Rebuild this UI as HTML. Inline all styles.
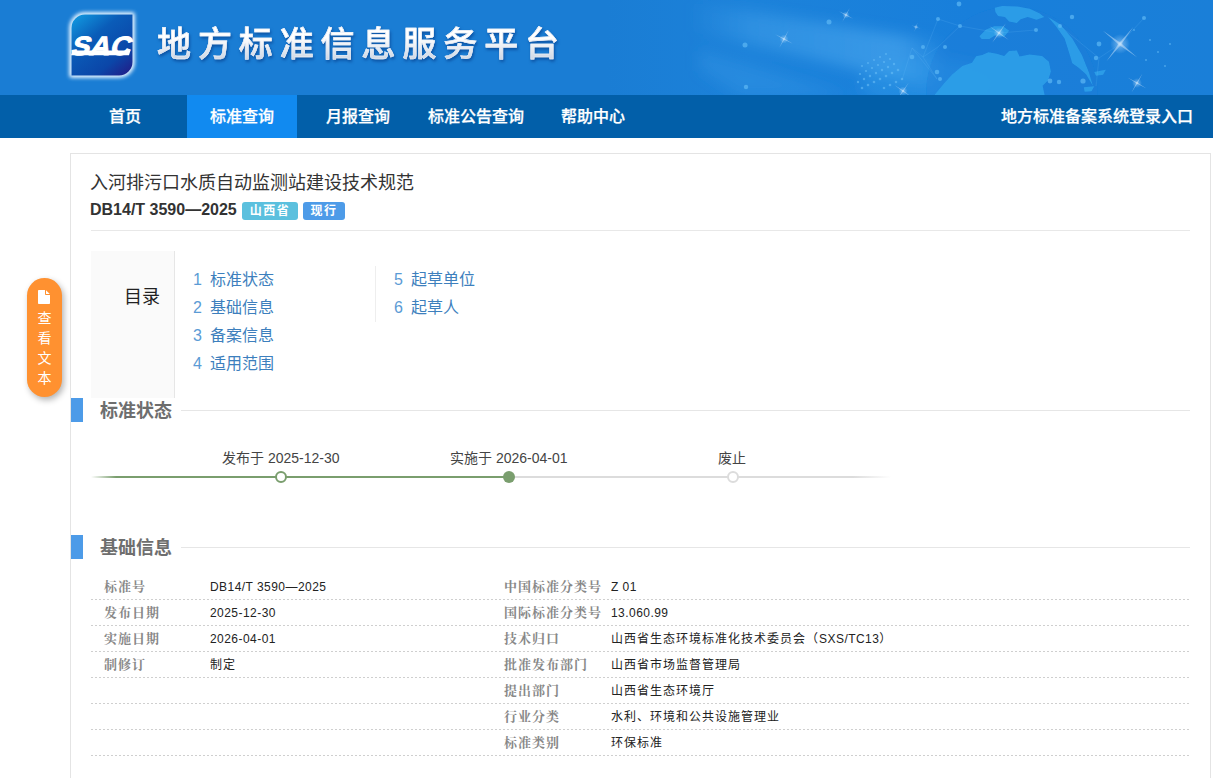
<!DOCTYPE html>
<html lang="zh-CN">
<head>
<meta charset="utf-8">
<title>地方标准信息服务平台</title>
<style>
*{box-sizing:border-box;}
html,body{margin:0;padding:0;}
body{width:1213px;height:778px;overflow:hidden;background:#fff;font-family:"Liberation Sans","Noto Sans CJK SC",sans-serif;color:#333;position:relative;}
.hdr{position:absolute;left:0;top:0;width:1213px;height:95px;background:#1b7ed6;overflow:hidden;}
.hdr .glow{position:absolute;left:600px;top:0;width:613px;height:95px;}
.logo{position:absolute;left:71px;top:14px;width:62px;height:62px;}
.sitename{position:absolute;left:157px;top:22px;font-size:34px;line-height:44px;letter-spacing:6.9px;color:transparent;font-weight:500;-webkit-text-stroke:0.55px #e9eef6;background:linear-gradient(#ffffff 35%,#c4cfdf 95%);-webkit-background-clip:text;background-clip:text;filter:drop-shadow(1px 2px 1.5px rgba(0,45,120,.55));white-space:nowrap;}
.nav{position:absolute;left:0;top:95px;width:1213px;height:43px;background:#025fa9;}
.nav a{position:absolute;top:0;height:43px;line-height:43px;color:#fff;font-size:16px;font-weight:500;-webkit-text-stroke:.25px #fff;text-decoration:none;text-align:center;white-space:nowrap;}
.nav a.act{background:#118af0;}
.panel{position:absolute;left:70px;top:153px;width:1141px;height:640px;border:1px solid #e4e4e4;background:#fff;}
.title{position:absolute;left:90px;top:169px;font-size:18px;line-height:28px;color:#333;white-space:nowrap;}
.code{position:absolute;left:90px;top:199px;font-size:16px;line-height:22px;font-weight:bold;color:#333;white-space:nowrap;}
.tag{position:absolute;top:202px;height:18px;line-height:18px;color:#fff;font-size:12px;font-weight:bold;border-radius:3px;text-align:center;letter-spacing:1.5px;}
.hr1{position:absolute;left:91px;top:230px;width:1099px;height:1px;background:#e8e8e8;}
.mulu{position:absolute;left:91px;top:251px;width:84px;height:147px;background:#fafafa;border-right:1px solid #e6e6e6;}
.mulu span{position:absolute;left:33px;top:33px;font-size:18px;line-height:26px;color:#222;}
.toc{position:absolute;font-size:16px;line-height:28px;color:#3d7fbd;white-space:nowrap;}
.toc i{font-style:normal;color:#5b9bd5;margin-right:8px;}
.vsep{position:absolute;left:375px;top:266px;width:1px;height:56px;background:#eee;}
.sec{position:absolute;left:71px;width:12px;height:24px;background:#4d9be8;}
.sect{position:absolute;left:100px;font-size:18px;line-height:26px;font-weight:bold;color:#6e6e6e;white-space:nowrap;}
.secl{position:absolute;left:181px;width:1009px;height:1px;background:#e6e6e6;}
.tl{position:absolute;font-size:14px;line-height:18px;color:#444;white-space:nowrap;}
.row{position:absolute;left:91px;width:1099px;height:1px;background:repeating-linear-gradient(90deg,#cfcfcf 0,#cfcfcf 2px,transparent 2px,transparent 4px);}
.k{position:absolute;font-size:13px;line-height:18px;color:#888;font-weight:bold;letter-spacing:1px;white-space:nowrap;font-family:"Liberation Serif","Noto Serif CJK SC",serif;}
.v{position:absolute;font-size:12px;line-height:18px;color:#222;white-space:nowrap;letter-spacing:1px;}
.v b{font-weight:normal;letter-spacing:.45px;}
.fbtn{position:absolute;left:27px;top:278px;width:35px;height:119px;border-radius:18px;background:#ff9130;box-shadow:2px 3px 6px rgba(0,0,0,.3);color:#fff;font-size:14px;line-height:20px;text-align:center;padding-top:30px;}
</style>
</head>
<body>
<div class="hdr">
<svg class="glow" style="left:0;width:1213px" viewBox="0 0 1213 95" width="1213" height="95">
<defs>
<linearGradient id="bg" x1="0" x2="1" y1="0" y2="0"><stop offset="0" stop-color="#1a7dd4"/><stop offset="0.5" stop-color="#1a7dd4"/><stop offset="0.62" stop-color="#1c82da"/><stop offset="0.8" stop-color="#187fdb"/><stop offset="1" stop-color="#1a7fd8"/></linearGradient>
<linearGradient id="st1" x1="0" x2="0" y1="0" y2="1"><stop offset="0" stop-color="#5fb6f5" stop-opacity="0"/><stop offset="0.5" stop-color="#5fb6f5" stop-opacity=".38"/><stop offset="1" stop-color="#5fb6f5" stop-opacity="0"/></linearGradient>
<linearGradient id="bm" gradientUnits="userSpaceOnUse" x1="690" x2="950" y1="0" y2="0"><stop offset="0" stop-color="#58b2f4" stop-opacity="0"/><stop offset="0.25" stop-color="#58b2f4" stop-opacity=".3"/><stop offset="0.8" stop-color="#58b2f4" stop-opacity=".5"/><stop offset="1" stop-color="#58b2f4" stop-opacity="0"/></linearGradient>
<radialGradient id="sp"><stop offset="0" stop-color="#fff" stop-opacity=".7"/><stop offset="0.35" stop-color="#bfe2ff" stop-opacity=".35"/><stop offset="1" stop-color="#bfe2ff" stop-opacity="0"/></radialGradient>
<radialGradient id="lg" cx="0.55" cy="0.6" r="0.6"><stop offset="0" stop-color="#3aa6ee" stop-opacity=".55"/><stop offset="1" stop-color="#3aa6ee" stop-opacity="0"/></radialGradient>
<filter id="bl" x="-20%" y="-50%" width="140%" height="200%"><feGaussianBlur stdDeviation="7"/></filter>
<filter id="b1"><feGaussianBlur stdDeviation="0.6"/></filter>
<symbol id="star" viewBox="-20 -20 40 40" overflow="visible"><circle r="9" fill="url(#sp)"/><path d="M-20 0 L0 -1.1 L20 0 L0 1.1Z M0 -20 L1.1 0 L0 20 L-1.1 0Z" fill="#e8f4ff" opacity=".42"/></symbol>
</defs>
<rect width="1213" height="95" fill="url(#bg)"/>
<g filter="url(#bl)">
<path d="M690 2 L945 42 L935 88 L690 30Z" fill="url(#bm)"/>
<path d="M700 50 L850 96 L740 96 L700 70Z" fill="#4aa9f0" opacity=".22"/>
<ellipse cx="930" cy="84" rx="70" ry="26" fill="#3aa6ee" opacity=".3"/>
</g>
<g transform="translate(880,0) scale(0.2747)" filter="url(#b1)">
<circle cx="480" cy="335" r="312" fill="#167ad6" opacity=".3"/>
<g fill="#2e9fe9" opacity=".92">
<path d="M195 350 L232 305 L262 272 L300 240 L335 228 L350 205 L372 200 L395 190 L425 196 L452 204 L470 186 L498 184 L508 206 L545 198 L590 204 L615 225 L622 260 L612 292 L592 312 L600 350Z"/>
<path d="M418 28 L445 22 L500 24 L545 32 L580 48 L598 62 L570 72 L538 62 L512 70 L498 84 L470 78 L455 62 L430 58 L420 44Z"/>
<path d="M362 132 L385 108 L415 96 L448 96 L470 112 L452 134 L420 128 L398 142 L370 142Z"/>
<path d="M612 62 L655 88 L700 140 L735 200 L760 262 L775 312 L750 270 L722 246 L700 230 L688 190 L672 140 L640 95Z"/>
<path d="M780 262 L822 254 L812 272 L786 276Z M742 318 L780 314 L770 332 L745 334Z"/>
</g>
</g>
<g stroke="#6ec0f7" stroke-width=".5" opacity=".35" fill="none">
<path d="M912 48 L923 57 L938 19 L960 26 L938 47 L923 57 L937 79 L912 48 L902 80 M960 26 L999 33 L1036 30 M1060 26 L1099 58 L1096 86 M1099 58 L1120 44 L1144 18"/>
</g>
<g fill="#5db8f5" opacity=".7">
<circle cx="912" cy="57" r="2.3"/><circle cx="923" cy="47" r="2"/><circle cx="938" cy="19" r="2"/><circle cx="960" cy="26" r="2"/><circle cx="945" cy="47" r="2"/><circle cx="937" cy="72" r="2.3"/><circle cx="940" cy="79" r="2"/><circle cx="959" cy="4" r="2.4"/><circle cx="1036" cy="30" r="2"/><circle cx="1060" cy="26" r="2"/><circle cx="1072" cy="17" r="2.2"/><circle cx="1050" cy="81" r="2.4"/><circle cx="1059" cy="82" r="2.2"/><circle cx="1083" cy="81" r="2.6"/><circle cx="1099" cy="44" r="2.4"/><circle cx="1096" cy="58" r="2.2"/><circle cx="1144" cy="18" r="2"/><circle cx="745" cy="45" r="2.5"/><circle cx="829" cy="22" r="2.5"/><circle cx="746" cy="87" r="2.2"/>
</g>
<g fill="#6cc0f8" opacity=".55">
<circle cx="862" cy="66" r="1"/><circle cx="868" cy="63" r="1"/><circle cx="874" cy="60" r="1"/><circle cx="880" cy="57" r="1"/><circle cx="886" cy="54" r="1"/>
<circle cx="860" cy="74" r="1.1"/><circle cx="866" cy="71" r="1.1"/><circle cx="872" cy="68" r="1.1"/><circle cx="878" cy="65" r="1.1"/><circle cx="884" cy="62" r="1.1"/><circle cx="890" cy="59" r="1.1"/>
<circle cx="858" cy="82" r="1.2"/><circle cx="864" cy="79" r="1.2"/><circle cx="870" cy="76" r="1.2"/><circle cx="876" cy="73" r="1.2"/><circle cx="882" cy="70" r="1.2"/><circle cx="888" cy="67" r="1.2"/><circle cx="894" cy="64" r="1.2"/>
<circle cx="862" cy="88" r="1.3"/><circle cx="868" cy="85" r="1.3"/><circle cx="874" cy="82" r="1.3"/><circle cx="880" cy="79" r="1.3"/><circle cx="886" cy="76" r="1.3"/><circle cx="892" cy="73" r="1.3"/><circle cx="898" cy="70" r="1.3"/>
<circle cx="884" cy="88" r="1.3"/><circle cx="890" cy="85" r="1.3"/><circle cx="896" cy="82" r="1.3"/><circle cx="902" cy="79" r="1.3"/><circle cx="1150" cy="40" r="1"/><circle cx="1158" cy="52" r="1"/><circle cx="1146" cy="60" r="1"/><circle cx="1165" cy="66" r="1"/><circle cx="1134" cy="30" r="1"/><circle cx="1170" cy="44" r="1"/>
</g>
<use href="#star" x="774" y="29" width="20" height="20" transform="rotate(28 784 39)"/>
<use href="#star" x="838" y="7" width="16" height="16" transform="rotate(28 846 15)"/>
<use href="#star" x="911" y="22" width="10" height="10" transform="rotate(20 916 27)"/>
<use href="#star" x="987" y="21" width="24" height="24" transform="rotate(35 999 33)"/>
<use href="#star" x="1098" y="22" width="44" height="44" transform="rotate(38 1120 44)"/>
<use href="#star" x="1126" y="72" width="22" height="22" transform="rotate(30 1137 83)"/>
<use href="#star" x="893" y="81" width="20" height="20" transform="rotate(35 903 91)"/>
</svg>
<svg class="logo" style="left:61px;top:4px;width:82px;height:82px" viewBox="-10 -10 82 82" overflow="visible">
<defs>
<linearGradient id="lgd" x1="0.1" y1="0" x2="0.9" y2="1"><stop offset="0" stop-color="#1196de"/><stop offset="0.35" stop-color="#0a5cb8"/><stop offset="0.75" stop-color="#0b46a8"/><stop offset="1" stop-color="#20208a"/></linearGradient>
<filter id="lgl" x="-30%" y="-30%" width="160%" height="160%"><feGaussianBlur stdDeviation="2.2"/></filter>
</defs>
<path d="M14 -1 H63 V48 A15 15 0 0 1 48 63 H-1 V14 A15 15 0 0 1 14 -1Z" fill="#e6f4ff" filter="url(#lgl)"/><path d="M14 -1 H63 V48 A15 15 0 0 1 48 63 H-1 V14 A15 15 0 0 1 14 -1Z" fill="#e6f4ff" filter="url(#lgl)" opacity=".7"/>
<path d="M14 0.5 H61.5 V48 A13.5 13.5 0 0 1 48 61.5 H0.5 V14 A13.5 13.5 0 0 1 14 0.5Z" fill="url(#lgd)"/>
<g transform="translate(0 41.3) skewX(-17)">
<rect x="0" y="-4.7" width="58" height="4.7" fill="#fff"/>
<text x="-1.2" y="0" font-family="'Liberation Sans',sans-serif" font-weight="bold" font-size="26.5" textLength="59.5" lengthAdjust="spacingAndGlyphs" fill="#fff" stroke="#fff" stroke-width=".9">SAC</text>
</g>
</svg>
<div class="sitename">地方标准信息服务平台</div>
</div>
<div class="nav">
<a style="left:70px;width:110px;">首页</a>
<a class="act" style="left:187px;width:110px;">标准查询</a>
<a style="left:303px;width:110px;">月报查询</a>
<a style="left:420px;width:112px;">标准公告查询</a>
<a style="left:538px;width:110px;">帮助中心</a>
<a style="left:991px;width:212px;">地方标准备案系统登录入口</a>
</div>
<div class="panel"></div>
<div class="title">入河排污口水质自动监测站建设技术规范</div>
<div class="code">DB14/T 3590—2025</div>
<div class="tag" style="left:242px;width:56px;background:#5bc0de;">山西省</div>
<div class="tag" style="left:303px;width:42px;background:#4d9be8;">现行</div>
<div class="hr1"></div>
<div class="mulu"><span>目录</span></div>
<div class="toc" style="left:193px;top:266px;"><i>1</i>标准状态</div>
<div class="toc" style="left:193px;top:294px;"><i>2</i>基础信息</div>
<div class="toc" style="left:193px;top:322px;"><i>3</i>备案信息</div>
<div class="toc" style="left:193px;top:350px;"><i>4</i>适用范围</div>
<div class="toc" style="left:394px;top:266px;"><i>5</i>起草单位</div>
<div class="toc" style="left:394px;top:294px;"><i>6</i>起草人</div>
<div class="vsep"></div>

<div class="sec" style="top:398px;"></div><div class="sect" style="top:398px;">标准状态</div><div class="secl" style="top:410px;"></div>
<div class="sec" style="top:535px;"></div><div class="sect" style="top:535px;">基础信息</div><div class="secl" style="top:547px;"></div>


<svg style="position:absolute;left:91px;top:466px;" width="800" height="22" viewBox="0 0 800 22">
<defs>
<linearGradient id="gl" x1="0" x2="1" y1="0" y2="0"><stop offset="0" stop-color="#7a9e6e" stop-opacity="0"/><stop offset="0.06" stop-color="#7a9e6e"/><stop offset="1" stop-color="#7a9e6e"/></linearGradient>
<linearGradient id="gr" x1="0" x2="1" y1="0" y2="0"><stop offset="0" stop-color="#dcdcdc"/><stop offset="0.9" stop-color="#dcdcdc"/><stop offset="1" stop-color="#dcdcdc" stop-opacity="0"/></linearGradient>
</defs>
<rect x="0" y="10" width="418" height="2" fill="url(#gl)"/>
<rect x="418" y="10" width="382" height="2" fill="url(#gr)"/>
<circle cx="190" cy="11" r="5" fill="#fff" stroke="#7a9e6e" stroke-width="2"/>
<circle cx="418" cy="11" r="6" fill="#7a9e6e"/>
<circle cx="642" cy="11" r="5" fill="#fff" stroke="#dcdcdc" stroke-width="2"/>
</svg>
<div class="tl" style="left:222px;top:449px;">发布于 2025-12-30</div>
<div class="tl" style="left:450px;top:449px;">实施于 2026-04-01</div>
<div class="tl" style="left:718px;top:449px;">废止</div>
<div class="row" style="top:599px;"></div>
<div class="row" style="top:625px;"></div>
<div class="row" style="top:651px;"></div>
<div class="row" style="top:677px;"></div>
<div class="row" style="top:703px;"></div>
<div class="row" style="top:729px;"></div>
<div class="row" style="top:755px;"></div>
<div class="k" style="left:104px;top:578px;">标准号</div><div class="v" style="left:210px;top:578px;"><b>DB14/T 3590—2025</b></div>
<div class="k" style="left:104px;top:604px;">发布日期</div><div class="v" style="left:210px;top:604px;"><b>2025-12-30</b></div>
<div class="k" style="left:104px;top:630px;">实施日期</div><div class="v" style="left:210px;top:630px;"><b>2026-04-01</b></div>
<div class="k" style="left:104px;top:656px;">制修订</div><div class="v" style="left:210px;top:656px;">制定</div>
<div class="k" style="left:504px;top:578px;">中国标准分类号</div><div class="v" style="left:611px;top:578px;"><b>Z 01</b></div>
<div class="k" style="left:504px;top:604px;">国际标准分类号</div><div class="v" style="left:611px;top:604px;"><b>13.060.99</b></div>
<div class="k" style="left:504px;top:630px;">技术归口</div><div class="v" style="left:611px;top:630px;">山西省生态环境标准化技术委员会（<b>SXS/TC13</b>）</div>
<div class="k" style="left:504px;top:656px;">批准发布部门</div><div class="v" style="left:611px;top:656px;">山西省市场监督管理局</div>
<div class="k" style="left:504px;top:682px;">提出部门</div><div class="v" style="left:611px;top:682px;">山西省生态环境厅</div>
<div class="k" style="left:504px;top:708px;">行业分类</div><div class="v" style="left:611px;top:708px;">水利、环境和公共设施管理业</div>
<div class="k" style="left:504px;top:734px;">标准类别</div><div class="v" style="left:611px;top:734px;">环保标准</div>
<div class="fbtn"><svg style="position:absolute;left:11px;top:12px" width="12" height="14" viewBox="0 0 12 14"><path d="M0.8 0 H7 V4.2 Q7 5 7.8 5 H12 V13.2 Q12 14 11.2 14 H0.8 Q0 14 0 13.2 V0.8 Q0 0 0.8 0Z M8 0.2 L11.8 4 H8Z" fill="#fff"/></svg>查<br>看<br>文<br>本</div>
</body>
</html>
